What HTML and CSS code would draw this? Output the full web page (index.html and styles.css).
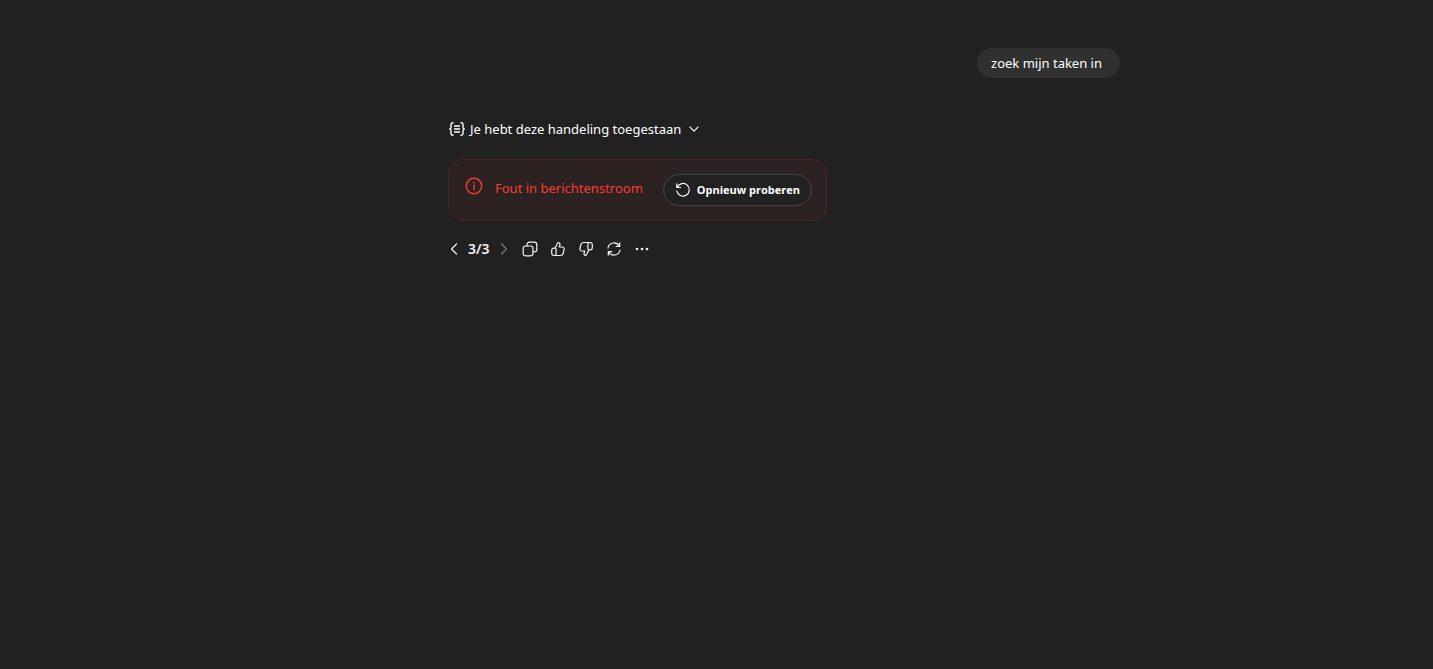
FILE: index.html
```html
<!DOCTYPE html>
<html lang="nl">

<head>
    <meta charset="UTF-8">
    <meta name="viewport" content="width=device-width, initial-scale=1.0">
    <title>Chat</title>
    <link rel="stylesheet" href="styles.css">
</head>

<body>
    <main class="chat">
        <div class="thread">
            <div class="user-message">zoek mijn taken in</div>

            <button class="action-toggle" type="button" aria-expanded="false">
                <svg width="16" height="16" viewBox="0 0 16 16" stroke-width="1.4" aria-hidden="true">
                    <path d="M4 1.800h-.3A1.700 1.700 0 0 0 2 3.500V6C2 7.200 1.600 8 .7 8c.9 0 1.300.8 1.300 2v2.500a1.700 1.700 0 0 0 1.700 1.700H4M12 1.800h.3A1.700 1.700 0 0 1 14 3.500V6c0 1.200.4 2 1.300 2-.9 0-1.300.8-1.300 2v2.500a1.700 1.700 0 0 1-1.700 1.700H12M5.500 5h5M5.500 8h5M5.500 11h5" />
                </svg>
                <span>Je hebt deze handeling toegestaan</span>
                <svg class="chevron" width="10" height="10" viewBox="0 0 10 10" stroke-width="1.2" aria-hidden="true">
                    <path d="M1 3.200l4 4 4-4" />
                </svg>
            </button>

            <div class="error-box" role="alert">
                <svg class="error-icon" width="18" height="18" viewBox="0 0 18 18" stroke-width="1.4" aria-hidden="true">
                    <circle cx="9" cy="9" r="7.700" />
                    <path d="M9 8.200v4.600" />
                    <circle class="dot" cx="9" cy="5.600" r=".9" />
                </svg>
                <p class="error-text">Fout in berichtenstroom</p>
                <button class="retry-button" type="button">
                    <svg width="16" height="16" viewBox="0 0 16 16" stroke-width="1.2" aria-hidden="true">
                        <path d="M1.800 1.800v3.700h3.700M2.200 5.300A6.300 6.300 0 1 1 1.800 9" />
                    </svg>
                    Opnieuw proberen
                </button>
            </div>

            <div class="toolbar">
                <button class="page-button" type="button" aria-label="Vorige">
                    <svg width="12" height="12" viewBox="0 0 12 12" stroke-width="1.2" aria-hidden="true">
                        <path d="M8.500 1L3.500 6l5 5" />
                    </svg>
                </button>
                <span class="page-count">3/3</span>
                <button class="page-button" type="button" aria-label="Volgende" disabled>
                    <svg width="12" height="12" viewBox="0 0 12 12" stroke-width="1.2" aria-hidden="true">
                        <path d="M3.500 1l5 5-5 5" />
                    </svg>
                </button>
                <div class="actions">
                    <button class="icon-button" type="button" aria-label="Kopiëren">
                        <svg width="16" height="16" viewBox="0 0 16 16" stroke-width="1.2" aria-hidden="true">
                            <rect x="1.200" y="5" width="9.800" height="9.800" rx="2.400" />
                            <path d="M5 5V3.600a2.400 2.400 0 0 1 2.400-2.400h5a2.400 2.400 0 0 1 2.400 2.400v5a2.400 2.400 0 0 1-2.400 2.400H11" />
                        </svg>
                    </button>
                    <button class="icon-button" type="button" aria-label="Goed antwoord">
                        <svg width="16" height="16" viewBox="0 0 16 16" stroke-width="1.2" aria-hidden="true">
                            <path id="thumb" d="M5 7.200L8 1.500c1.300-.1 2.200 1 1.900 2.300L9.400 6h2.800c1.300 0 2.200 1.200 1.900 2.400l-1 4.100a2.600 2.600 0 0 1-2.500 2H4a2.300 2.300 0 0 1-2.300-2.300V9.200c0-1.100.9-2 2-2H5c.7 0 1.100.6 1.100 1.300v4c0 1-.5 1.700-1.400 2" />
                        </svg>
                    </button>
                    <button class="icon-button" type="button" aria-label="Slecht antwoord">
                        <svg width="16" height="16" viewBox="0 0 16 16" stroke-width="1.2" aria-hidden="true">
                            <use href="#thumb" transform="rotate(180 8 8)" />
                        </svg>
                    </button>
                    <button class="icon-button" type="button" aria-label="Opnieuw genereren">
                        <svg width="16" height="16" viewBox="0 0 16 16" stroke-width="1.2" aria-hidden="true">
                            <path d="M2 7a6.100 6.100 0 0 1 11.300-2M13.700 1.800v3.500h-3.500M14 9a6.100 6.100 0 0 1-11.300 2M2.300 14.200v-3.500h3.500" />
                        </svg>
                    </button>
                    <button class="icon-button" type="button" aria-label="Meer acties">
                        <svg width="16" height="16" viewBox="0 0 16 16" aria-hidden="true">
                            <circle class="dot" cx="3" cy="8" r="1.300" />
                            <circle class="dot" cx="8" cy="8" r="1.300" />
                            <circle class="dot" cx="13" cy="8" r="1.300" />
                        </svg>
                    </button>
                </div>
            </div>
        </div>
    </main>
</body>

</html>
```
FILE: styles.css
```css
* {
    margin: 0;
    padding: 0;
    box-sizing: border-box;
}

body {
    font-family: 'Segoe UI', 'Noto Sans', 'Open Sans', sans-serif;
    font-size: 13px;
    line-height: 20px;
    background: #212121;
    color: #fff;
    min-height: 100vh;
}

button {
    font: inherit;
    color: inherit;
    background: none;
    border: none;
    cursor: pointer;
}

svg {
    flex-shrink: 0;
    fill: none;
    stroke: currentColor;
    stroke-linecap: round;
    stroke-linejoin: round;
}

.dot {
    fill: currentColor;
    stroke: none;
}

.chat {
    padding: 48px 0 48px 135px;
}

.thread {
    display: flex;
    flex-direction: column;
    align-items: flex-start;
    max-width: 672px;
    margin: 0 auto;
}

.user-message {
    align-self: flex-end;
    background: #303030;
    border-radius: 15px;
    padding: 5px 18px 5px 14px;
    margin-bottom: 41px;
}

.action-toggle {
    display: flex;
    align-items: center;
    gap: 5px;
    padding-left: 1px;
    margin-bottom: 20px;
}

.chevron {
    margin-left: 3px;
}

.error-box {
    display: flex;
    align-items: flex-start;
    background: #2c2222;
    border: 1px solid #4a2525;
    border-radius: 14px;
    padding: 14px;
    margin-bottom: 18px;
    color: #f93a37;
}

.error-icon {
    margin: 3px 12px 0 2px;
}

.error-text {
    margin: 4px 20px 0 0;
}

.retry-button {
    display: flex;
    align-items: center;
    gap: 6px;
    height: 32px;
    padding: 0 11px;
    background: #212121;
    border: 1px solid #444;
    border-radius: 16px;
    color: #fff;
    font-family: 'Segoe UI', 'Open Sans', sans-serif;
    font-size: 11px;
    font-weight: 700;
}

.toolbar {
    display: flex;
    align-items: center;
    color: #f3f3f3;
}

.actions {
    display: flex;
    margin-left: 6px;
}

.page-button,
.icon-button {
    display: flex;
    align-items: center;
    justify-content: center;
    height: 20px;
}

.page-button {
    width: 12px;
}

.page-button:disabled {
    color: #777;
    cursor: default;
}

.page-count {
    padding: 0 8px;
    font-size: 14px;
    font-weight: 600;
}

.icon-button {
    width: 28px;
}
```
